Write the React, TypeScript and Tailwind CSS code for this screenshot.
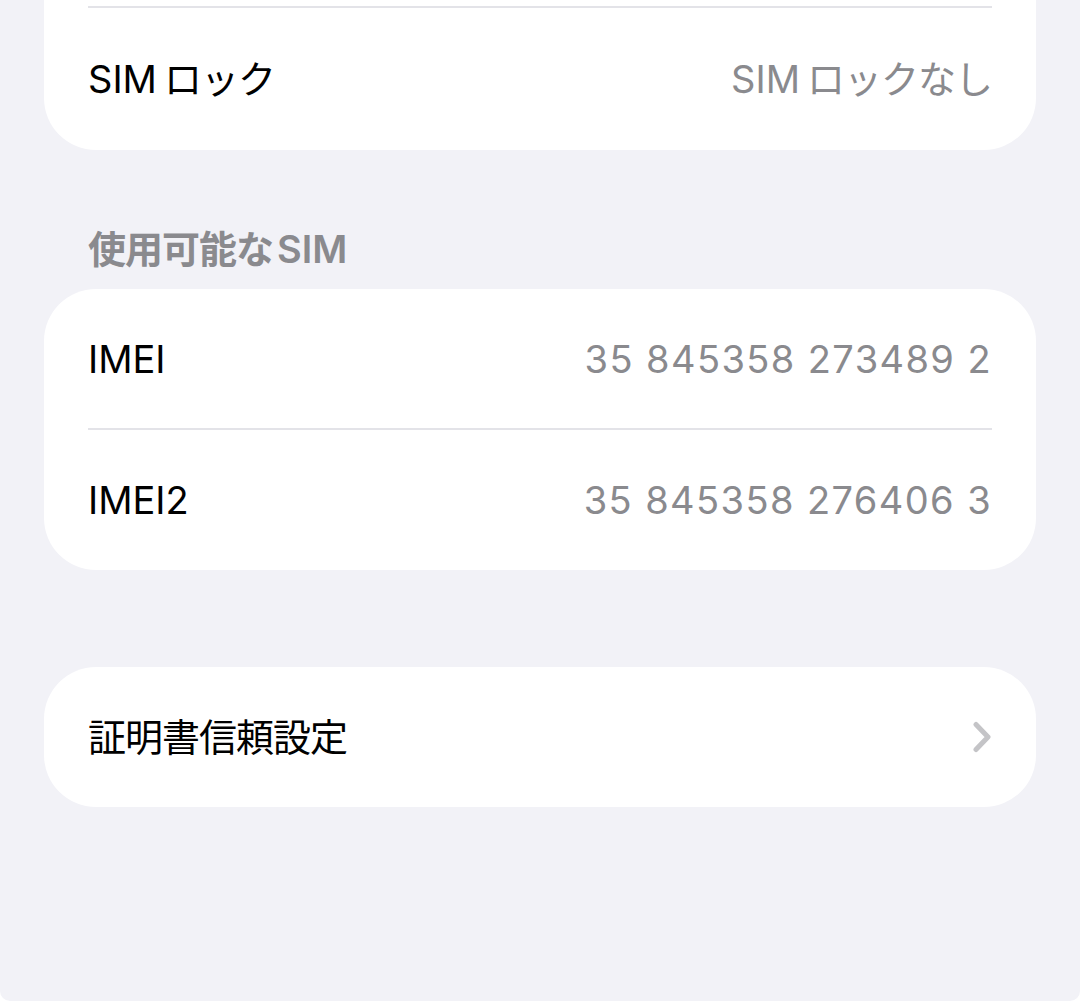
const FONT = "font-['Inter','Noto_Sans_CJK_JP',sans-serif]";

function Divider() {
  return <div className="mx-[44px] h-[2px] bg-[#e3e3e8]" />;
}

function Row({ label, value, h }: { label: React.ReactNode; value?: React.ReactNode; h: string }) {
  return (
    <div className={`flex items-center justify-between px-[44px] ${h}`}>
      <span className="text-[38px] leading-none text-black">{label}</span>
      {value && (
        <span className="text-[38px] leading-none text-[#8a8a8e]">{value}</span>
      )}
    </div>
  );
}

// Latin "SIM" followed by kana with the small gap iOS puts between scripts
function SimLock({ suffix }: { suffix: string }) {
  return (
    <>
      SIM<span className="ml-[7px] tracking-[-1px]">{suffix}</span>
    </>
  );
}

export default function App() {
  return (
    <div className={`${FONT} w-[1080px] h-[1004px] overflow-hidden bg-white`}>
      <div className="flex h-[1001px] flex-col rounded-b-[10px] bg-[#f2f2f7]">
        {/* ── SIM lock card (top cut off) ── */}
        <div className="mx-[44px] rounded-b-[52px] bg-white pt-[6px]">
          <Divider />
          <Row
            label={<SimLock suffix="ロック" />}
            value={<SimLock suffix="ロックなし" />}
            h="h-[142px]"
          />
        </div>

        {/* ── Section header ── */}
        <div className="flex h-[48px] items-center px-[88px] mt-[75px] mb-[16px]">
          <span className="text-[38px] font-semibold leading-none text-[#8a8a8e]">
            <span className="tracking-[-1px]">使用可能な</span>
            <span className="ml-[4px]">SIM</span>
          </span>
        </div>

        {/* ── IMEI card ── */}
        <div className="mx-[44px] rounded-[52px] bg-white">
          <Row
            label="IMEI"
            value={<span className="tracking-[1.4px]">35 845358 273489 2</span>}
            h="h-[139px]"
          />
          <Divider />
          <Row
            label="IMEI2"
            value={<span className="tracking-[1.4px]">35 845358 276406 3</span>}
            h="h-[140px]"
          />
        </div>

        {/* ── Certificate trust ── */}
        <div className="mx-[44px] mt-[97px] flex h-[140px] items-center justify-between rounded-[52px] bg-white px-[44px]">
          <span className="text-[38px] leading-none tracking-[-1px] text-black">証明書信頼設定</span>
          <svg width="20" height="32" viewBox="0 0 20 32" fill="none">
            <path
              d="M4 3.5 L16 16 L4 28.5"
              stroke="#c4c4c7"
              strokeWidth="5"
              strokeLinecap="round"
              strokeLinejoin="round"
            />
          </svg>
        </div>
      </div>
    </div>
  );
}
